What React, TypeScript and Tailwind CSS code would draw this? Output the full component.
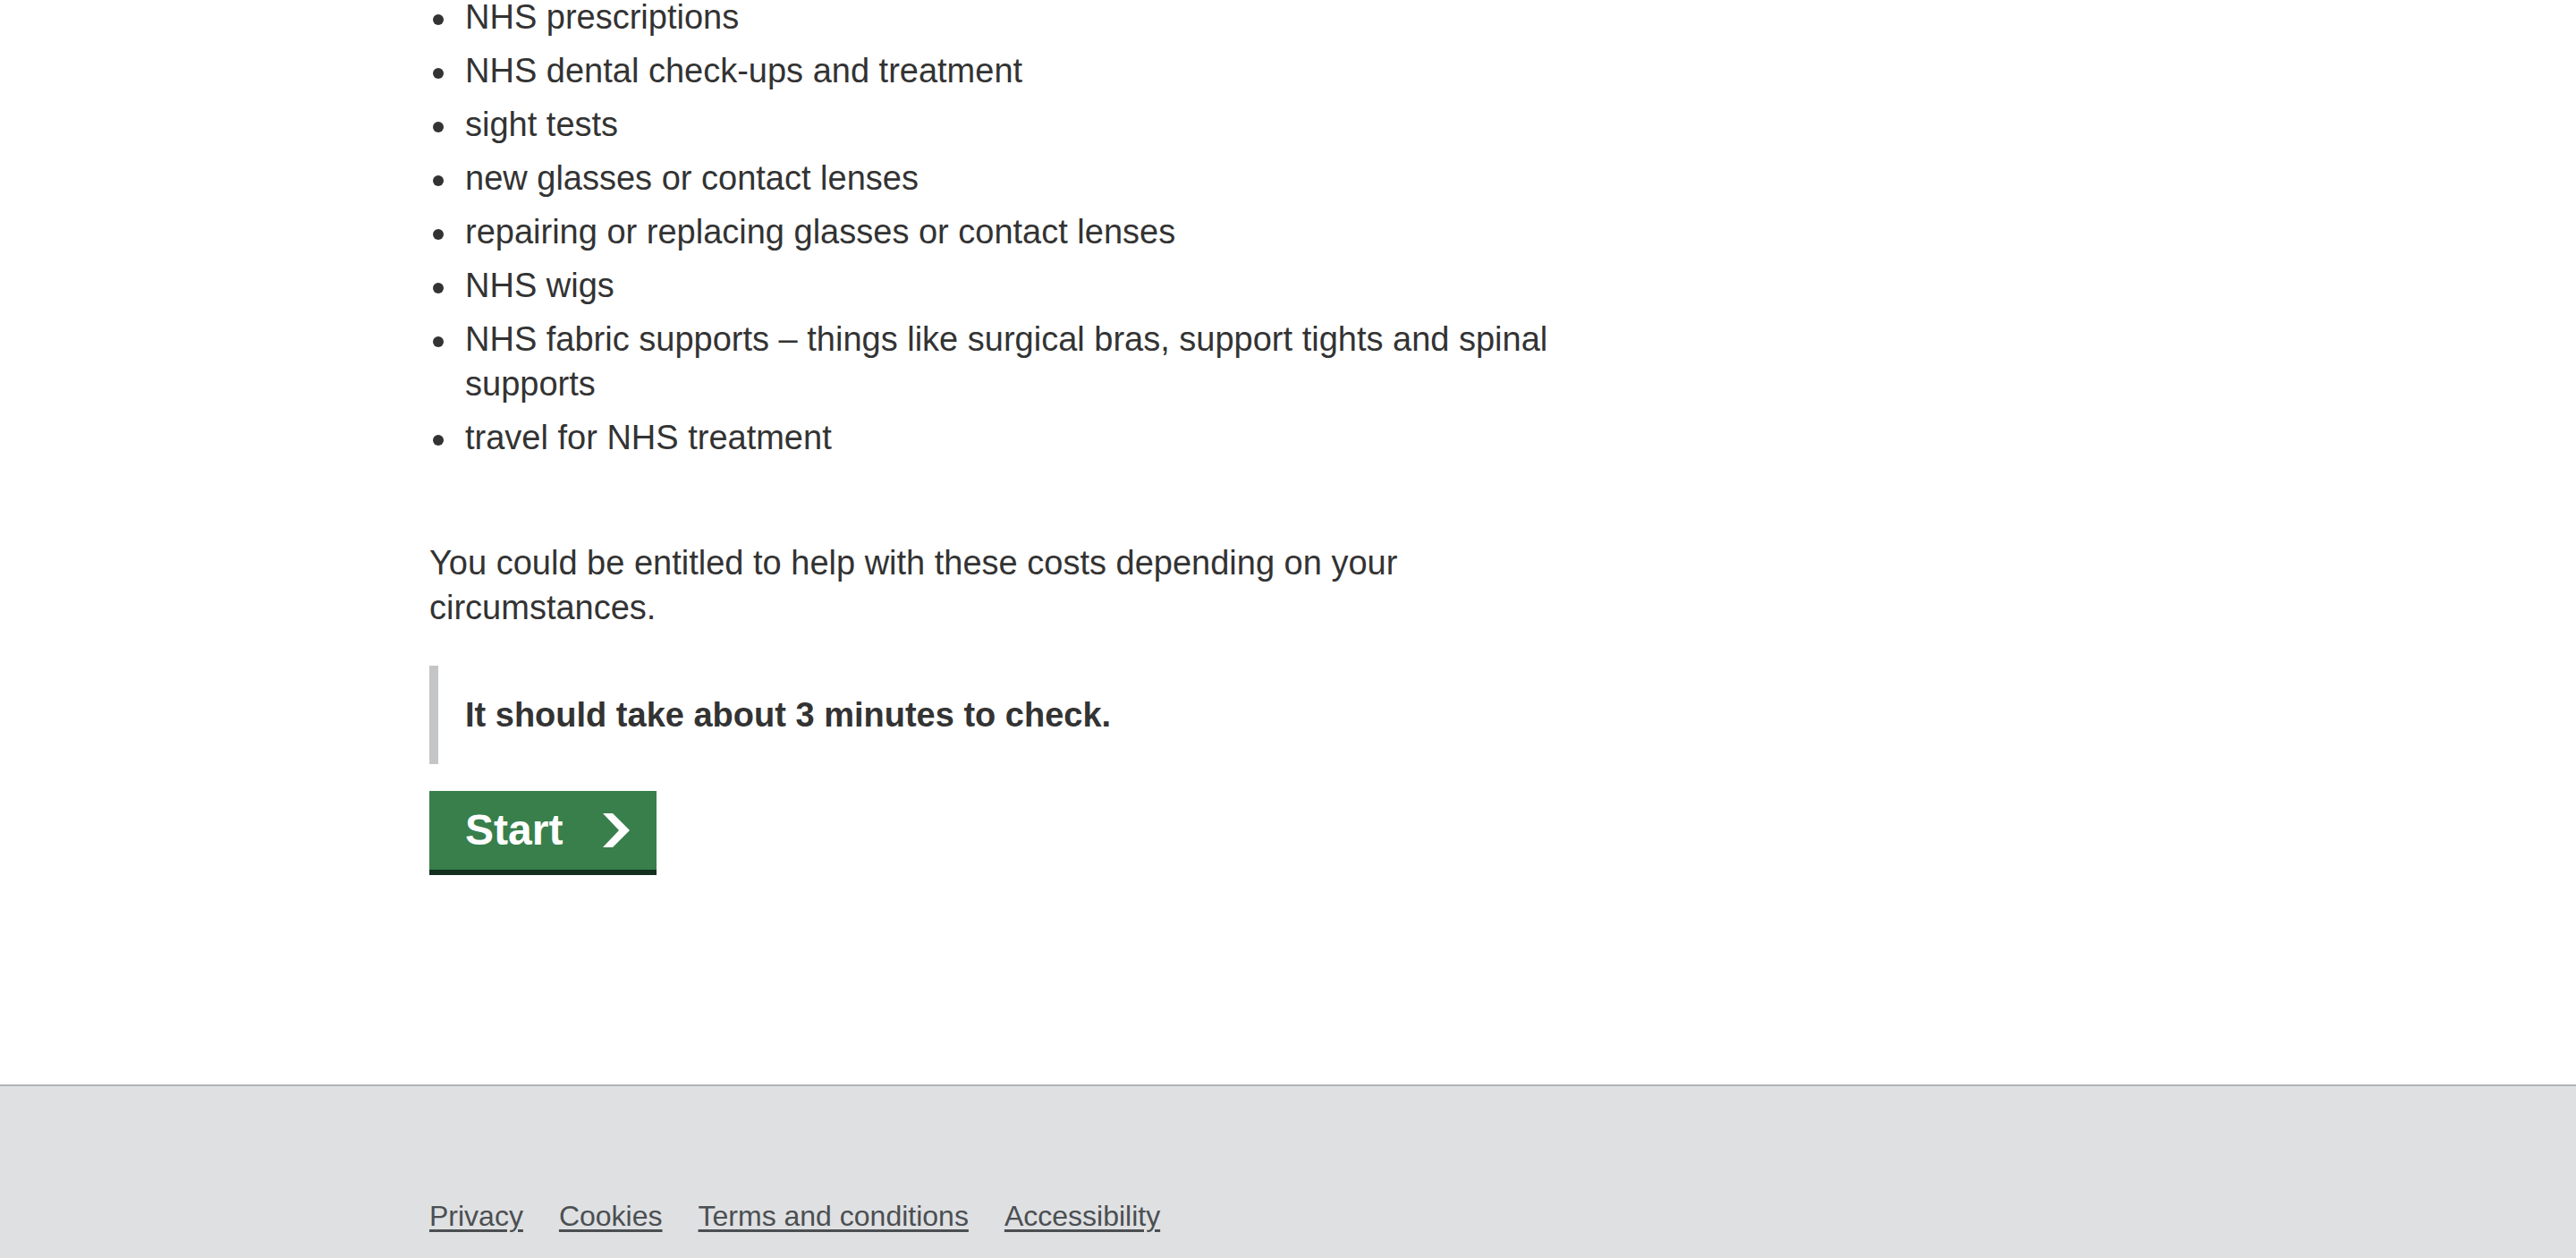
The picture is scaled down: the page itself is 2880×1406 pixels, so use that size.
import React from 'react';

const items = [
  'NHS prescriptions',
  'NHS dental check-ups and treatment',
  'sight tests',
  'new glasses or contact lenses',
  'repairing or replacing glasses or contact lenses',
  'NHS wigs',
  'NHS fabric supports – things like surgical bras, support tights and spinal supports',
  'travel for NHS treatment',
];

const footerLinks = ['Privacy', 'Cookies', 'Terms and conditions', 'Accessibility'];

const App: React.FC = () => {
  return (
    <div className="min-h-screen bg-white font-['Liberation_Sans',Arial,sans-serif] text-[#333333]">
      <main className="mx-auto w-[1920px]">
        <div className="max-w-[1280px]">
          {/* bullet list */}
          <ul className="-mt-[6px] mb-[90px] text-[38px] leading-[50px]">
            {items.map((item) => (
              <li key={item} className="mb-[10px] flex">
                <span className="w-[40px] shrink-0">
                  <span className="ml-[4px] mt-[22px] block h-[12px] w-[12px] rounded-full bg-[#333333]" />
                </span>
                <span>{item}</span>
              </li>
            ))}
          </ul>

          <p className="mb-[40px] text-[38px] leading-[50px]">
            You could be entitled to help with these costs depending on your circumstances.
          </p>

          <div className="mb-[30px] border-l-[10px] border-[#c4c5c6] py-[30px] pl-[30px]">
            <p className="text-[38px] font-bold leading-[50px]">It should take about 3 minutes to check.</p>
          </div>

          <a
            href="#"
            className="mb-[240px] inline-flex h-[88px] w-[254px] items-center bg-[#387f4c] pl-[40px] text-[48px] font-bold text-white shadow-[0_6px_0_#13301e]"
          >
            <span>Start</span>
            <svg className="ml-[43px]" width="32" height="38" viewBox="0 0 32 38" fill="white">
              <polygon points="2,0 13,0 32,19 13,38 2,38 20,19" />
            </svg>
          </a>
        </div>
      </main>

      <footer className="border-t-2 border-[#b1b3b4] bg-[#dfe0e2] pb-[60px] pt-[121px]">
        <div className="mx-auto flex w-[1920px] gap-[40px] text-[32px] leading-[48px]">
          {footerLinks.map((link) => (
            <a key={link} href="#" className="text-[#4b4f52] underline underline-offset-[4px]">
              {link}
            </a>
          ))}
        </div>
      </footer>
    </div>
  );
};

export default App;
